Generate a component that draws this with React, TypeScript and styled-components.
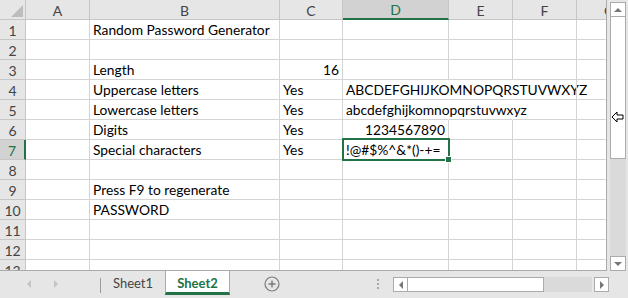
import React from 'react';
import styled, { createGlobalStyle, css } from 'styled-components';

const GlobalStyle = createGlobalStyle`
  body {
    margin: 0;
    font-family: Lato, 'Liberation Sans', sans-serif;
    background: #ffffff;
  }
`;

const green = '#217346';
const headBg = '#e6e6e6';
const headLine = '#c6c6c6';
const gridLine = '#d4d4d4';

const Window = styled.div`
  position: relative;
  width: 628px;
  height: 298px;
  background: ${headBg};
  display: flex;
  flex-direction: column;
  overflow: hidden;
`;

const Top = styled.div`
  display: flex;
  height: 271px;
`;

const Sheet = styled.div`
  display: grid;
  grid-template-columns: 26px 64px 190px 63px 106px 64px 64px 29px;
  grid-auto-rows: 20px;
  width: 607px;
  height: 271px;
  box-sizing: border-box;
  background: #ffffff;
  border-right: 1px solid #ababab;
  border-bottom: 1px solid #ababab;
  overflow: hidden;
  font-size: 13.8px;
  color: #000000;
`;

const Corner = styled.div`
  position: relative;
  background: ${headBg};
  border-right: 1px solid ${headLine};
  border-bottom: 1px solid ${headLine};
  &::after {
    content: '';
    position: absolute;
    right: 2px;
    bottom: 2px;
    border-left: 12px solid transparent;
    border-bottom: 12px solid #bdbdbd;
  }
`;

const ColHead = styled.div<{ $sel?: boolean; $clip?: boolean }>`
  display: flex;
  align-items: center;
  justify-content: ${(p) => (p.$clip ? 'flex-start' : 'center')};
  overflow: hidden;
  box-sizing: border-box;
  background: ${headBg};
  border-right: 1px solid ${headLine};
  border-bottom: 1px solid ${headLine};
  color: #444444;
  font-size: 14px;
  padding-top: 1px;
  ${(p) =>
    p.$sel &&
    css`
      background: #d2d2d2;
      color: ${green};
      border-bottom: 2px solid ${green};
    `}
  ${(p) =>
    p.$clip &&
    css`
      border-right: none;
    `}
`;

const ClipLabel = styled.span`
  flex: 0 0 64px;
  text-align: center;
`;

const RowHead = styled.div<{ $sel?: boolean }>`
  display: flex;
  align-items: center;
  justify-content: center;
  box-sizing: border-box;
  background: ${headBg};
  border-right: 1px solid ${headLine};
  border-bottom: 1px solid ${headLine};
  color: #444444;
  font-size: 14px;
  padding-top: 1px;
  ${(p) =>
    p.$sel &&
    css`
      background: #d2d2d2;
      color: ${green};
      border-right: 2px solid ${green};
    `}
`;

const Cell = styled.div<{ $align?: string; $spill?: boolean; $active?: boolean; $last?: boolean }>`
  position: relative;
  box-sizing: border-box;
  padding: 0 3px;
  line-height: 20px;
  white-space: nowrap;
  text-align: ${(p) => p.$align || 'left'};
  border-right: 1px solid ${(p) => (p.$spill || p.$last ? 'transparent' : gridLine)};
  border-bottom: 1px solid ${gridLine};
  ${(p) =>
    p.$active &&
    css`
      z-index: 2;
      &::before {
        content: '';
        position: absolute;
        left: -1px;
        top: -2px;
        right: -2px;
        bottom: -2px;
        border: 2px solid ${green};
      }
      &::after {
        content: '';
        position: absolute;
        right: -4px;
        bottom: -4px;
        width: 5px;
        height: 5px;
        background: ${green};
        border: 1px solid #ffffff;
      }
    `}
`;

const VScroll = styled.div`
  display: flex;
  flex-direction: column;
  width: 21px;
  padding: 2px 2px 0 3px;
  box-sizing: border-box;
`;

const ArrowBox = styled.div`
  width: 16px;
  height: 15px;
  box-sizing: border-box;
  background: #ffffff;
  border: 1px solid #ababab;
  display: flex;
  align-items: center;
  justify-content: center;
  flex: 0 0 auto;
`;

const VThumb = styled.div`
  height: 142px;
  box-sizing: border-box;
  background: #ffffff;
  border: 1px solid #ababab;
  border-top: none;
`;

const VTrack = styled.div`
  flex: 1;
  background: #dadada;
`;

const TabBar = styled.div`
  display: flex;
  align-items: flex-start;
  height: 27px;
  font-size: 13px;
`;

const Nav = styled.div`
  width: 100px;
  height: 25px;
  display: flex;
  align-items: center;
  gap: 21px;
  padding-left: 26px;
  box-sizing: border-box;
`;

const Sep = styled.div`
  width: 1px;
  height: 15px;
  margin-top: 7px;
  background: #9c9c9c;
`;

const Tab = styled.div<{ $active?: boolean }>`
  width: 64px;
  height: 24px;
  display: flex;
  align-items: center;
  justify-content: center;
  box-sizing: border-box;
  color: #444444;
  ${(p) =>
    p.$active &&
    css`
      width: 65px;
      background: #ffffff;
      color: ${green};
      font-weight: bold;
      border-left: 1px solid #ababab;
      border-right: 1px solid #ababab;
      border-bottom: 3px solid ${green};
      padding-top: 2px;
    `}
`;

const AddBtn = styled.div`
  width: 20px;
  height: 25px;
  margin-left: 32px;
  display: flex;
  align-items: center;
  justify-content: center;
`;

const Dots = styled.div`
  margin-left: 95px;
  margin-top: 8px;
  display: flex;
  flex-direction: column;
  gap: 2px;
  & > span {
    width: 2px;
    height: 2px;
    background: #a8a8a8;
  }
`;

const HScroll = styled.div`
  display: flex;
  margin-left: 14px;
  margin-top: 6px;
  width: 216px;
  height: 15px;
`;

const HArrow = styled(ArrowBox)`
  width: 15px;
  height: 15px;
`;

const HThumb = styled.div`
  width: 136px;
  box-sizing: border-box;
  background: #ffffff;
  border: 1px solid #ababab;
  border-left: none;
`;

const HTrack = styled.div`
  flex: 1;
  background: #dadada;
  margin-right: 2px;
`;

const Cursor = styled.svg`
  position: absolute;
  left: 611px;
  top: 111px;
`;

type CellData = { text: string; align?: string; spill?: boolean; active?: boolean };

const cols = ['A', 'B', 'C', 'D', 'E', 'F', 'G'];

const data: Record<number, Record<string, CellData>> = {
  1: { B: { text: 'Random Password Generator' } },
  3: { B: { text: 'Length' }, C: { text: '16', align: 'right' } },
  4: {
    B: { text: 'Uppercase letters' },
    C: { text: 'Yes' },
    D: { text: 'ABCDEFGHIJKOMNOPQRSTUVWXYZ', spill: true },
    E: { text: '', spill: true },
  },
  5: {
    B: { text: 'Lowercase letters' },
    C: { text: 'Yes' },
    D: { text: 'abcdefghijkomnopqrstuvwxyz', spill: true },
    E: { text: '', spill: true },
  },
  6: { B: { text: 'Digits' }, C: { text: 'Yes' }, D: { text: '1234567890', align: 'right' } },
  7: { B: { text: 'Special characters' }, C: { text: 'Yes' }, D: { text: '!@#$%^&*()-+=', active: true } },
  9: { B: { text: 'Press F9 to regenerate' } },
  10: { B: { text: 'PASSWORD' } },
};

const rows = Array.from({ length: 13 }, (_, i) => i + 1);

const Tri = ({ dir, color = '#c4c4c4' }: { dir: 'left' | 'right' | 'up' | 'down'; color?: string }) => {
  const pts = {
    left: '5,0 5,8 1,4',
    right: '1,0 1,8 5,4',
    up: '0,5 8,5 4,1',
    down: '0,1 8,1 4,5',
  }[dir];
  const w = dir === 'left' || dir === 'right' ? 6 : 8;
  const h = dir === 'left' || dir === 'right' ? 8 : 6;
  return (
    <svg width={w} height={h} viewBox={`0 0 ${w} ${h}`}>
      <polygon points={pts} fill={color} />
    </svg>
  );
};

export default function App() {
  return (
    <>
      <GlobalStyle />
      <Window>
        <Top>
          <Sheet>
            <Corner />
            {cols.map((c) =>
              c === 'G' ? (
                <ColHead key={c} $clip>
                  <ClipLabel>{c}</ClipLabel>
                </ColHead>
              ) : (
                <ColHead key={c} $sel={c === 'D'}>
                  {c}
                </ColHead>
              )
            )}
            {rows.map((r) => (
              <React.Fragment key={r}>
                <RowHead $sel={r === 7}>{r}</RowHead>
                {cols.map((c) => {
                  const d = data[r]?.[c];
                  return (
                    <Cell key={c} $align={d?.align} $spill={d?.spill} $active={d?.active} $last={c === 'G'}>
                      {d?.text}
                    </Cell>
                  );
                })}
              </React.Fragment>
            ))}
          </Sheet>
          <VScroll>
            <ArrowBox>
              <Tri dir="up" color="#777777" />
            </ArrowBox>
            <VThumb />
            <VTrack />
            <ArrowBox>
              <Tri dir="down" color="#777777" />
            </ArrowBox>
          </VScroll>
        </Top>
        <TabBar>
          <Nav>
            <Tri dir="left" />
            <Tri dir="right" />
          </Nav>
          <Sep />
          <Tab>Sheet1</Tab>
          <Tab $active>Sheet2</Tab>
          <AddBtn>
            <svg width="16" height="16" viewBox="0 0 16 16">
              <circle cx="8" cy="8" r="7" fill="none" stroke="#7a7a7a" strokeWidth="1.2" />
              <path d="M8 4.5v7M4.5 8h7" stroke="#7a7a7a" strokeWidth="1.4" />
            </svg>
          </AddBtn>
          <Dots>
            <span />
            <span />
            <span />
          </Dots>
          <HScroll>
            <HArrow>
              <Tri dir="left" color="#777777" />
            </HArrow>
            <HThumb />
            <HTrack />
            <HArrow>
              <Tri dir="right" color="#777777" />
            </HArrow>
          </HScroll>
        </TabBar>
        <Cursor width="14" height="12" viewBox="0 0 14 12">
          <polygon points="1,6 6,1 6,4 12,4 12,8 6,8 6,11" fill="#ffffff" stroke="#000000" strokeWidth="1" />
        </Cursor>
      </Window>
    </>
  );
}
